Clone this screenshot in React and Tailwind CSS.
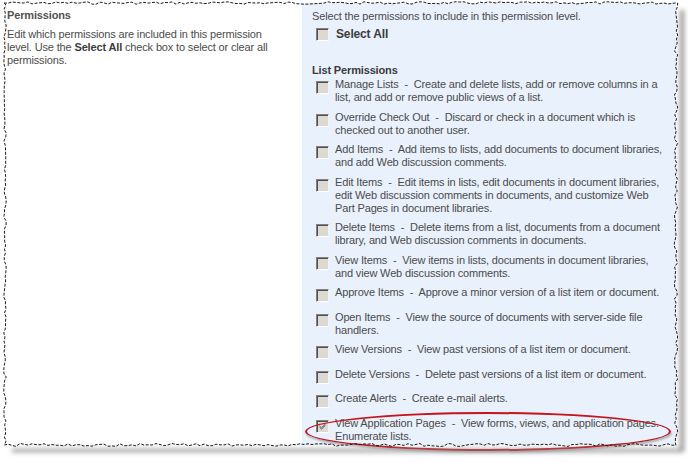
const ITEMS = [
  { name: 'Manage Lists', lines: ['Create and delete lists, add or remove columns in a', 'list, and add or remove public views of a list.'] },
  { name: 'Override Check Out', lines: ['Discard or check in a document which is', 'checked out to another user.'] },
  { name: 'Add Items', lines: ['Add items to lists, add documents to document libraries,', 'and add Web discussion comments.'] },
  { name: 'Edit Items', lines: ['Edit items in lists, edit documents in document libraries,', 'edit Web discussion comments in documents, and customize Web', 'Part Pages in document libraries.'] },
  { name: 'Delete Items', lines: ['Delete items from a list, documents from a document', 'library, and Web discussion comments in documents.'] },
  { name: 'View Items', lines: ['View items in lists, documents in document libraries,', 'and view Web discussion comments.'] },
  { name: 'Approve Items', lines: ['Approve a minor version of a list item or document.'] },
  { name: 'Open Items', lines: ['View the source of documents with server-side file', 'handlers.'] },
  { name: 'View Versions', lines: ['View past versions of a list item or document.'] },
  { name: 'Delete Versions', lines: ['Delete past versions of a list item or document.'] },
  { name: 'Create Alerts', lines: ['Create e-mail alerts.'] },
  { name: 'View Application Pages', lines: ['View forms, views, and application pages.', 'Enumerate lists.'], checked: true },
]

function Box({ checked }) {
  return (
    <span className="relative block w-[13px] h-[13px] shrink-0 bg-[#dbd9d2] border border-t-[#808080] border-l-[#808080] border-b-white border-r-[#f4f3ef] shadow-[inset_1px_1px_0_#505050]">
      {checked && (
        <svg viewBox="0 0 11 11" className="absolute inset-0 w-[11px] h-[11px]">
          <path d="M2.5 4.5 L4.5 6.5 L8.5 2.5 M2.5 5.5 L4.5 7.5 L8.5 3.5 M2.5 6.5 L4.5 8.5 L8.5 4.5" stroke="#8a8a8a" strokeWidth="1" fill="none" />
        </svg>
      )}
    </span>
  )
}

// jagged edge of the clipped screenshot
function jag(seed) {
  let s = seed
  return () => {
    s = (s * 9301 + 49297) % 233280
    return s / 233280
  }
}

function TornEdge() {
  const r = jag(7)
  const pts = []
  for (let x = 4; x <= 676; x += 4) pts.push([x, 3 + (r() - 0.5) * 2.5])
  for (let y = 3; y <= 445; y += 4) pts.push([676 + (r() - 0.5) * 3.5, y])
  for (let x = 676; x >= 5; x -= 4) pts.push([x, 445 + (r() - 0.5) * 3])
  for (let y = 445; y >= 3; y -= 4) pts.push([5 + (r() - 0.5) * 2.5, y])
  const d = 'M' + pts.map(p => p[0].toFixed(1) + ' ' + p[1].toFixed(1)).join(' L') + 'Z'
  return (
    <svg className="absolute inset-0 pointer-events-none" width="688" height="463">
      <defs>
        <filter id="sh" x="-5%" y="-5%" width="110%" height="110%">
          <feGaussianBlur stdDeviation="2.5" />
        </filter>
      </defs>
      <path d="M680 10 L684 10 L684 452 L12 452 L12 449 L680 449 Z" fill="#8c8c8c" filter="url(#sh)" />
      <path d={d} fill="none" stroke="#1e1e1e" strokeWidth="1" strokeDasharray="3 1.5" />
    </svg>
  )
}

export default function App() {
  return (
    <div className="relative w-[688px] h-[463px] bg-white overflow-hidden text-[11px] leading-[13px] tracking-[-0.15px] text-[#4c4c4c] font-['Liberation_Sans',Arial,sans-serif]">
      <div className="relative ml-[5px] mt-[3px] w-[671px] h-[442px] flex bg-white">
        <div className="w-[297px] pl-[2px] pt-[6px]">
          <div className="font-bold text-[#525252]">Permissions</div>
          <p className="mt-[6px] whitespace-nowrap">
            Edit which permissions are included in this permission<br />
            level. Use the <b className="text-[#3c3c3c]">Select All</b> check box to select or clear all<br />
            permissions.
          </p>
        </div>
        <div className="flex-1 bg-[#e9f1fc] pl-[10px] pt-[7px]">
          <div>Select the permissions to include in this permission level.</div>
          <label className="flex items-center gap-[7px] pl-[4px] mt-[5px] h-[13px]">
            <Box />
            <span className="font-bold text-[#3c3c3c] text-[12px]">Select All</span>
          </label>
          <div className="mt-[23px] font-bold text-[#3c3c3c]">List Permissions</div>
          <div className="mt-[1px] flex flex-col">
            {ITEMS.map(it => (
              <div key={it.name} className="flex gap-[6px] pl-[4px] pb-[6.5px]">
                <div className="pt-[3px] pb-[2px]">
                  <Box checked={it.checked} />
                </div>
                <div className="whitespace-pre">
                  {it.lines.map((l, i) => (
                    <div key={i}>{i === 0 ? `${it.name}  -  ${l}` : l}</div>
                  ))}
                </div>
              </div>
            ))}
          </div>
        </div>
      </div>
      <div className="absolute left-[305px] top-[412px] w-[366px] h-[39px] rounded-[50%] border-2 border-[#c4151c] shadow-[1px_2px_2px_rgba(0,0,0,0.25)]" />
      <TornEdge />
    </div>
  )
}
